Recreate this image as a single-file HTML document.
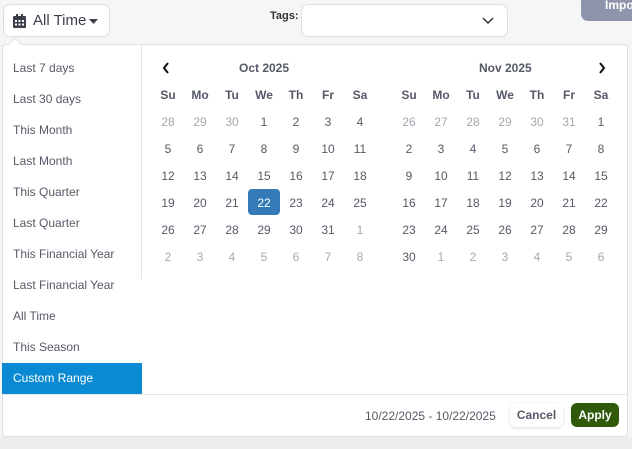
<!DOCTYPE html>
<html><head><meta charset="utf-8"><style>
*{box-sizing:border-box;margin:0;padding:0}
body{width:632px;height:449px;overflow:hidden;background:#f5f6f8;font-family:"Liberation Sans",sans-serif;position:relative;color:#555a66}
.a{position:absolute}
.btn{left:3px;top:4px;width:107px;height:33px;border:1px solid #dcdfe4;border-radius:7px;background:#fff;font-size:15px;color:#3a3f4a}
.tags{left:270px;top:10px;font-size:11px;font-weight:bold;color:#333}
.sel{left:301px;top:4px;width:207px;height:33px;border:1px solid #dcdfe4;border-radius:7px;background:#fff}
.imp{left:581px;top:-8px;width:60px;height:29px;background:#8f94ad;border-radius:7px;color:#fff;font-weight:bold;font-size:12px;padding:6px 0 0 24px}
.panel{left:2px;top:44px;width:626px;height:393px;background:#fff;border:1px solid #dde0e4;border-radius:4px}
.li{left:13px;font-size:12px;color:#555a66}
.cr{left:2px;top:363px;width:140px;height:31px;background:#0a8ad3;color:#fff;font-size:12px;padding:8px 0 0 11px}
.d{position:absolute;width:32px;text-align:center;font-size:12px;color:#555a66;transform:translate(-16px,0)}
.h{font-weight:bold;color:#555a66}
.o{color:#a4a8b0}
.m{font-weight:bold;font-size:12px;color:#555a66}
</style></head><body>
<div class="a imp">Impo</div>
<div class="a btn">
<svg class="a" style="left:9px;top:9px" width="13" height="14" viewBox="0 0 13 14"><rect x="0" y="2" width="13" height="12" rx="1" fill="#3a3f4a"/><rect x="3" y="0" width="2" height="4" fill="#3a3f4a"/><rect x="8" y="0" width="2" height="4" fill="#3a3f4a"/><g fill="#fff"><rect x="2" y="6" width="2" height="2"/><rect x="5.5" y="6" width="2" height="2"/><rect x="9" y="6" width="2" height="2"/><rect x="2" y="9.5" width="2" height="2"/><rect x="5.5" y="9.5" width="2" height="2"/><rect x="9" y="9.5" width="2" height="2"/></g></svg>
<span class="a" style="left:29px;top:7px">All Time</span>
<svg class="a" style="left:85px;top:14px" width="9" height="6"><path d="M0 0H9L4.5 5Z" fill="#3a3f4a"/></svg>
</div>
<div class="a tags">Tags:</div>
<div class="a sel"><svg class="a" style="left:180px;top:12px" width="12" height="8"><path d="M1 1L6 6L11 1" stroke="#333" stroke-width="1.5" fill="none"/></svg></div>
<div class="a panel"></div>
<svg class="a" style="left:8px;top:38px" width="16" height="8"><path d="M0 7L7 0L14 7" fill="#fff" stroke="#dde0e4"/></svg>
<div class="a" style="left:141px;top:45px;width:1px;height:234px;background:#e2e4e8"></div>
<div class="a" style="left:3px;top:394px;width:624px;height:1px;background:#e2e4e8"></div>
<div class="a" style="left:0;top:437px;width:632px;height:12px;background:#eceef0"></div>
<div class="a li" style="top:61px">Last 7 days</div>
<div class="a li" style="top:92px">Last 30 days</div>
<div class="a li" style="top:123px">This Month</div>
<div class="a li" style="top:154px">Last Month</div>
<div class="a li" style="top:185px">This Quarter</div>
<div class="a li" style="top:216px">Last Quarter</div>
<div class="a li" style="top:247px">This Financial Year</div>
<div class="a li" style="top:278px">Last Financial Year</div>
<div class="a li" style="top:309px">All Time</div>
<div class="a li" style="top:340px">This Season</div>
<div class="a cr">Custom Range</div>
<svg class="a" style="left:162px;top:62px" width="8" height="12"><path d="M6 1L2 6L6 11" stroke="#111" stroke-width="2" fill="none"/></svg>
<svg class="a" style="left:598px;top:62px" width="8" height="12"><path d="M2 1L6 6L2 11" stroke="#111" stroke-width="2" fill="none"/></svg>
<div class="a m" style="left:239px;top:61px">Oct 2025</div>
<div class="a m" style="left:479px;top:61px">Nov 2025</div>
<div class="a" style="left:248px;top:189px;width:32px;height:26px;background:#337ab7;border-radius:4px"></div>
<div id="g"></div>
<div class="a" style="left:365px;top:409px;font-size:12px;color:#555a66">10/22/2025 - 10/22/2025</div>
<div class="a" style="left:510px;top:403px;width:53px;height:24px;background:#fff;border-radius:6px;box-shadow:0 1px 3px rgba(0,0,0,.15);font-size:12px;font-weight:bold;color:#555a66;text-align:center;padding-top:5px">Cancel</div>
<div class="a" style="left:571px;top:403px;width:48px;height:24px;background:#2f5a0a;border-radius:6px;font-size:12px;font-weight:bold;color:#fff;text-align:center;padding-top:5px">Apply</div>
<script>
var g=document.getElementById('g'),h='';
var dows=['Su','Mo','Tu','We','Th','Fr','Sa'];
function cal(x0,start,days,prev){
 for(var i=0;i<7;i++)h+='<div class="d h" style="left:'+(x0+i*32)+'px;top:88px">'+dows[i]+'</div>';
 var d=1-start,nx=1;
 for(var r=0;r<6;r++)for(var c=0;c<7;c++){
  var t,cls='';
  if(d<1){t=prev+d;cls='o';}else if(d>days){t=nx++;cls='o';}else t=d;
  var col=(x0==168&&d==22)?'color:#fff;':'';
  h+='<div class="d '+cls+'" style="'+col+'left:'+(x0+c*32)+'px;top:'+(115+r*27)+'px">'+t+'</div>';
  d++;
 }
}
cal(168,3,31,30);cal(409,6,30,31);
g.innerHTML=h;
</script>
</body></html>
